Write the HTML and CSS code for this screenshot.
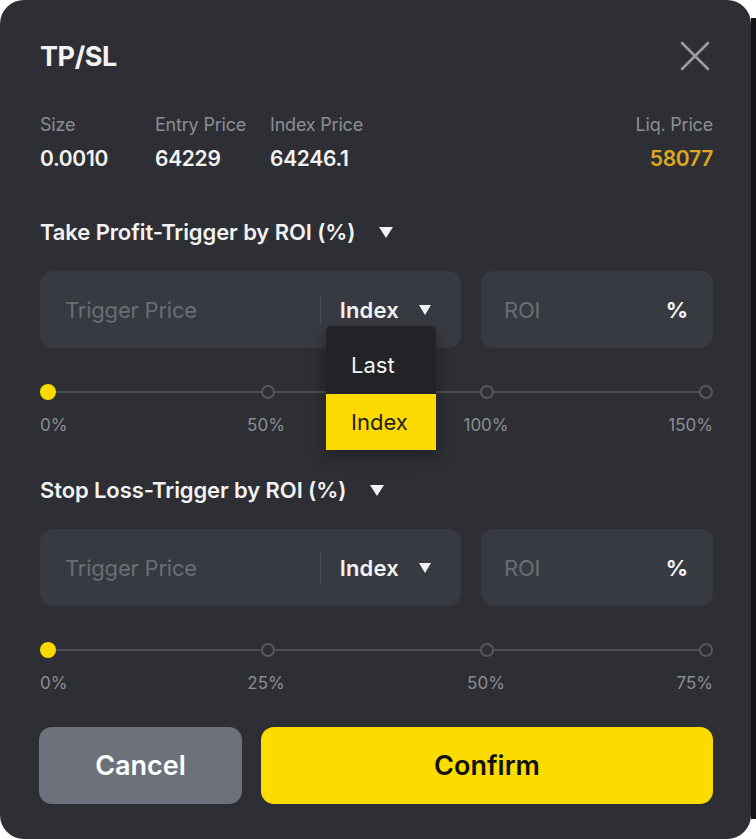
FILE: index.html
```html
<!DOCTYPE html>
<html lang="en">
<head>
    <meta charset="UTF-8">
    <meta name="viewport" content="width=device-width, initial-scale=1.0">
    <title>TP/SL</title>
    <link rel="stylesheet" href="styles.css">
</head>
<body>

    <div class="screen">
        <div class="modal">
            <div class="header">
                <h1 class="title">TP/SL</h1>
                <button class="close" aria-label="Close">
                    <svg width="30" height="30" viewBox="0 0 30 30">
                        <path d="M2 2 L28 28 M28 2 L2 28" stroke="#9b9da3" stroke-width="2.6" stroke-linecap="round" fill="none"/>
                    </svg>
                </button>
            </div>

            <div class="info">
                <div class="info-col">
                    <span class="info-label">Size</span>
                    <span class="info-value">0.0010</span>
                </div>
                <div class="info-col">
                    <span class="info-label">Entry Price</span>
                    <span class="info-value">64229</span>
                </div>
                <div class="info-col">
                    <span class="info-label">Index Price</span>
                    <span class="info-value">64246.1</span>
                </div>
                <div class="info-col liq">
                    <span class="info-label">Liq. Price</span>
                    <span class="info-value">58077</span>
                </div>
            </div>

            <!-- take profit -->
            <div class="section first">
                <div class="section-title">Take Profit-Trigger by ROI (%) <span class="caret"></span></div>
                <div class="inputs">
                    <div class="field price">
                        <span class="placeholder">Trigger Price</span>
                        <span class="divider"></span>
                        <span class="select">Index <span class="caret"></span></span>
                        <ul class="menu">
                            <li class="menu-item">Last</li>
                            <li class="menu-item active">Index</li>
                        </ul>
                    </div>
                    <div class="field roi">
                        <span class="placeholder">ROI</span>
                        <span class="unit">%</span>
                    </div>
                </div>
                <div class="slider">
                    <span class="dot on"></span>
                    <span class="dot"></span>
                    <span class="dot"></span>
                    <span class="dot"></span>
                </div>
                <div class="marks">
                    <span>0%</span><span>50%</span><span>100%</span><span>150%</span>
                </div>
            </div>

            <!-- stop loss -->
            <div class="section">
                <div class="section-title">Stop Loss-Trigger by ROI (%) <span class="caret"></span></div>
                <div class="inputs">
                    <div class="field price">
                        <span class="placeholder">Trigger Price</span>
                        <span class="divider"></span>
                        <span class="select">Index <span class="caret"></span></span>
                    </div>
                    <div class="field roi">
                        <span class="placeholder">ROI</span>
                        <span class="unit">%</span>
                    </div>
                </div>
                <div class="slider">
                    <span class="dot on"></span>
                    <span class="dot"></span>
                    <span class="dot"></span>
                    <span class="dot"></span>
                </div>
                <div class="marks">
                    <span>0%</span><span>25%</span><span>50%</span><span>75%</span>
                </div>
            </div>

            <div class="actions">
                <button class="btn cancel">Cancel</button>
                <button class="btn confirm">Confirm</button>
            </div>
        </div>
        <div class="chart-edge"></div>
    </div>

</body>
</html>
```

FILE: styles.css
```css
* {
    box-sizing: border-box;
}
body {
    margin: 0;
    background: #fff;
    font-family: Inter, "Noto Sans", sans-serif;
}
.screen {
    display: flex;
    height: 839px;
}
.modal {
    width: 751px;
    height: 839px;
    background: #2e2f34;
    border-radius: 24px;
    padding: 40px 38px 0 40px;
    color: #f2f2f3;
}
.chart-edge {
    flex: 1;
    margin: 18px 0 20px;
    background: #131417;
}
.header {
    display: flex;
    justify-content: space-between;
    align-items: center;
    height: 32px;
}
.title {
    margin: 0;
    font-size: 27px;
    font-weight: 700;
    letter-spacing: -0.4px;
}
.close {
    background: none;
    border: none;
    padding: 0;
    margin-right: 3px;
    width: 30px;
    height: 30px;
    cursor: pointer;
}
.info {
    display: flex;
    margin-top: 42px;
}
.info-col {
    display: flex;
    flex-direction: column;
    width: 115px;
}
.info-col.liq {
    margin-left: auto;
    width: auto;
    align-items: flex-end;
}
.info-label {
    font-size: 18px;
    line-height: 22px;
    color: #8b8e94;
    letter-spacing: -0.2px;
}
.info-value {
    margin-top: 11px;
    font-size: 21px;
    line-height: 24px;
    font-weight: 600;
    letter-spacing: -0.3px;
}
.liq .info-value {
    color: #dba81f;
}
.section {
    margin-top: 43px;
}
.section.first {
    margin-top: 49px;
}
.section-title {
    display: flex;
    align-items: center;
    font-size: 22px;
    line-height: 24px;
    font-weight: 600;
    letter-spacing: -0.1px;
}
.section-title .caret {
    margin-left: 24px;
}
.caret {
    display: inline-block;
    width: 0;
    height: 0;
    border-left: 7px solid transparent;
    border-right: 7px solid transparent;
    border-top: 11px solid #f2f2f3;
}
.inputs {
    display: flex;
    gap: 20px;
    margin-top: 27px;
}
.field {
    position: relative;
    display: flex;
    align-items: center;
    height: 77px;
    background: #383a41;
    border-radius: 13px;
    font-size: 22px;
}
.field.price {
    width: 421px;
    padding: 0 30px 0 25px;
}
.field.roi {
    flex: 1;
    padding: 0 25px 0 23px;
    justify-content: space-between;
}
.placeholder {
    color: #6a6d74;
    letter-spacing: -0.2px;
}
.divider {
    width: 1px;
    height: 30px;
    background: #4b4d55;
    margin-left: auto;
    margin-right: 19px;
}
.select {
    display: flex;
    align-items: center;
    gap: 20px;
    font-weight: 600;
    letter-spacing: 0.2px;
}
.select .caret {
    border-left-width: 6px;
    border-right-width: 6px;
    border-top-width: 10px;
}
.unit {
    font-weight: 700;
}
.menu {
    position: absolute;
    left: 286px;
    top: 55px;
    width: 110px;
    margin: 0;
    padding: 0;
    list-style: none;
    background: #222327;
    border-radius: 5px 5px 0 0;
    box-shadow: 0 6px 16px rgba(0, 0, 0, 0.35);
    z-index: 2;
}
.menu-item {
    display: flex;
    align-items: center;
    padding: 10px 0 0 25px;
    height: 68px;
    font-size: 22px;
    color: #f2f2f3;
}
.menu-item.active {
    padding-top: 0;
    height: 56px;
    background: #fcd900;
    color: #222;
}
.slider {
    position: relative;
    display: flex;
    justify-content: space-between;
    align-items: center;
    height: 20px;
    margin-top: 34px;
}
.slider::before {
    content: "";
    position: absolute;
    left: 6px;
    right: 6px;
    top: 9px;
    height: 2px;
    background: #4c4e55;
}
.dot {
    position: relative;
    width: 14px;
    height: 14px;
    border: 2px solid #56585f;
    border-radius: 50%;
    background: #2e2f34;
}
.dot.on {
    width: 16px;
    height: 16px;
    border: none;
    background: #fcd900;
}
.marks {
    display: flex;
    margin-top: 13px;
    font-size: 17px;
    line-height: 20px;
    color: #8b8e94;
}
.marks span:first-child {
    flex: 0 0 186px;
}
.marks span:nth-child(2),
.marks span:nth-child(3) {
    width: 80px;
    text-align: center;
}
.marks span:nth-child(3) {
    margin-left: 140px;
}
.marks span:last-child {
    margin-left: auto;
}
.actions {
    display: flex;
    gap: 19px;
    margin-top: 34px;
}
.btn {
    height: 77px;
    border: none;
    border-radius: 13px;
    font-family: inherit;
    font-size: 27px;
    font-weight: 600;
    letter-spacing: 0;
    cursor: pointer;
}
.btn.cancel {
    width: 203px;
    margin-left: -1px;
    background: #6c717b;
    color: #fff;
}
.btn.confirm {
    flex: 1;
    background: #fcdb00;
    color: #111;
}
```
